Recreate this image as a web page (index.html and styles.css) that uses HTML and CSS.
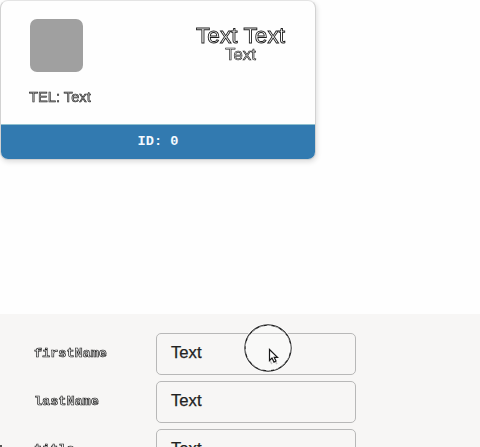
FILE: index.html
```html
<!DOCTYPE html>
<html lang="en">
<head>
<meta charset="utf-8">
<title>Contact card</title>
<link rel="stylesheet" href="styles.css">
</head>
<body>
<main class="page">
  <section class="preview">
    <article class="card">
      <div class="card-body">
        <div class="card-left">
          <div class="avatar"></div>
          <p class="phone">TEL: Text</p>
        </div>
        <div class="card-heading">
          <h1 class="name">Text Text</h1>
          <p class="role">Text</p>
        </div>
      </div>
      <footer class="card-footer">ID: 0</footer>
    </article>
  </section>
  <section class="form">
    <div class="row"><span class="label">firstName</span><div class="field">Text</div></div>
    <div class="row"><span class="label">lastName</span><div class="field">Text</div></div>
    <div class="row"><span class="label">title</span><div class="field">Text</div></div>
    <span class="edge-mark"></span>
    <svg class="pointer" width="50" height="50" viewBox="0 0 50 50">
      <circle cx="25" cy="25" r="23" fill="#fff" fill-opacity=".3" stroke="#fff" stroke-width="3"/>
      <circle cx="25" cy="25" r="23" fill="none" stroke="#222" stroke-width="1.4"/>
      <circle cx="25" cy="25" r="22.5" fill="none" stroke="#fff" stroke-width=".6" stroke-dasharray="5 3"/>
      <path d="M27 38l2 3m3-3l2 3" fill="none" stroke="#c4c4c4" stroke-width="1.5"/>
      <path d="M26.5 26.5v11l2.5-2.4 2 4 2-1-1.8-3.8h3.3z" fill="#fff" stroke="#181818" stroke-width="1.2"/>
    </svg>
  </section>
</main>
</body>
</html>
```
FILE: styles.css
```css
* { box-sizing: border-box; }
body {
  margin: 0;
  background: #fefefe;
  color: #222;
  font-family: "Liberation Sans", Arial, sans-serif;
}
h1, p { margin: 0; }
.page { height: 447px; overflow: hidden; }
.preview { height: 314px; }
.card {
  width: 316px;
  height: 160px;
  display: flex;
  flex-direction: column;
  border: 1px solid #d2d2d2;
  border-top-color: #e4e4e4;
  border-radius: 8px;
  background: #fefefe;
  box-shadow: 1px 2px 5px rgba(0, 0, 0, .13);
  overflow: hidden;
}
.card-body {
  flex: 1;
  display: flex;
  justify-content: space-between;
  padding: 18px 30px 0 28px;
}
.avatar {
  width: 53px;
  height: 53px;
  margin-left: 1px;
  border-radius: 7px;
  background: #a0a0a0;
}
.phone, .name, .role, .label { will-change: transform; }
.phone {
  margin-top: 16px;
  font-size: 14.7px;
  line-height: 18px;
  color: #bbb;
  -webkit-text-stroke: .6px #1c1c1c;
}
.card-heading { padding-top: 5px; text-align: center; }
.name {
  font-size: 22.7px;
  line-height: 22px;
  font-weight: 400;
  color: #fff;
  -webkit-text-stroke: .9px #1c1c1c;
}
.role {
  font-size: 16.7px;
  line-height: 18px;
  color: #ddd;
  -webkit-text-stroke: .65px #1c1c1c;
}
.card-footer {
  height: 35px;
  border-top: 1px solid #8fc0cf;
  background: #327ab0;
  color: #f5faff;
  text-align: center;
  font: bold 13.6px/34px "Liberation Mono", monospace;
}
.form {
  position: relative;
  height: 133px;
  padding: 19px 0 0 34px;
  background: #f7f6f5;
  display: flex;
  flex-direction: column;
  gap: 5px;
  overflow: hidden;
}
.row {
  flex: none;
  height: 43px;
  display: grid;
  grid-template-columns: 122px 200px;
  align-items: center;
}
.label {
  padding-bottom: 2px;
  font: bold 13.5px/16px "Liberation Mono", monospace;
  color: #eee;
  -webkit-text-stroke: .7px #1c1c1c;
}
.field {
  height: 42px;
  margin-bottom: 1px;
  padding-left: 14px;
  border: 1px solid #b8b8b8;
  border-radius: 5px;
  font-size: 16.7px;
  line-height: 38px;
  -webkit-text-stroke: .25px #222;
}
.pointer { position: absolute; left: 243px; top: 9px; }
.edge-mark {
  position: absolute;
  left: 0;
  bottom: 0;
  width: 2px;
  height: 2px;
  background: #555;
}
```
